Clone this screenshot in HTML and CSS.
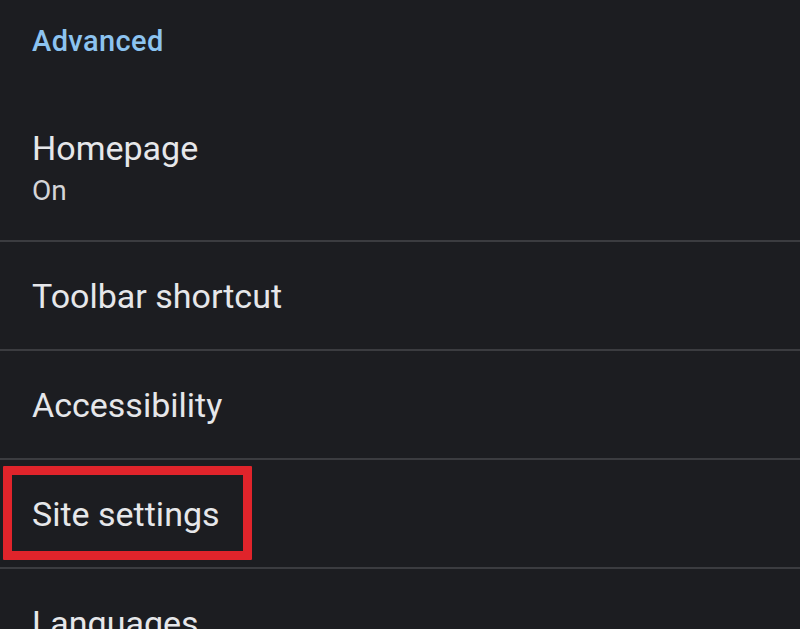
FILE: index.html
```html
<!DOCTYPE html>
<html lang="en">
<head>
<meta charset="utf-8">
<title>Settings</title>
<link rel="stylesheet" href="styles.css">
</head>
<body>
<main class="settings">
  <h2 class="section-title">Advanced</h2>
  <div class="item item-first">
    <div class="item-title">Homepage</div>
    <div class="item-sub">On</div>
  </div>
  <div class="item">
    <div class="item-title">Toolbar shortcut</div>
  </div>
  <div class="item">
    <div class="item-title">Accessibility</div>
  </div>
  <div class="item item-marked">
    <div class="item-title">Site settings</div>
    <span class="highlight" aria-hidden="true"></span>
  </div>
  <div class="item">
    <div class="item-title">Languages</div>
  </div>
</main>
</body>
</html>
```

FILE: styles.css
```css
html, body {
  margin: 0;
  padding: 0;
  background: #1c1d21;
}

body {
  font-family: Roboto, "Noto Sans", "Liberation Sans", sans-serif;
  color: #e6e7ea;
  overflow: hidden;
  height: 629px;
}

.settings {
  display: flex;
  flex-direction: column;
}

.section-title {
  margin: 0;
  padding: 25px 32px 0;
  font-size: 29px;
  line-height: 32px;
  font-weight: 500;
  color: #8cc3f0;
  letter-spacing: 0.4px;
}

.item {
  position: relative;
  display: flex;
  flex-direction: column;
  padding: 34px 32px 33px;
  border-bottom: 2px solid #3b3c40;
}

.item-first {
  padding-top: 71px;
}

.item-title {
  font-size: 34px;
  line-height: 40px;
  font-weight: 400;
}

.item-sub {
  margin-top: 7px;
  font-size: 28px;
  line-height: 32px;
  color: #d4d5d8;
}

.highlight {
  position: absolute;
  left: 3px;
  top: 6px;
  width: 231px;
  height: 76px;
  border: 9px solid #e0242b;
  border-radius: 1px;
}
```
